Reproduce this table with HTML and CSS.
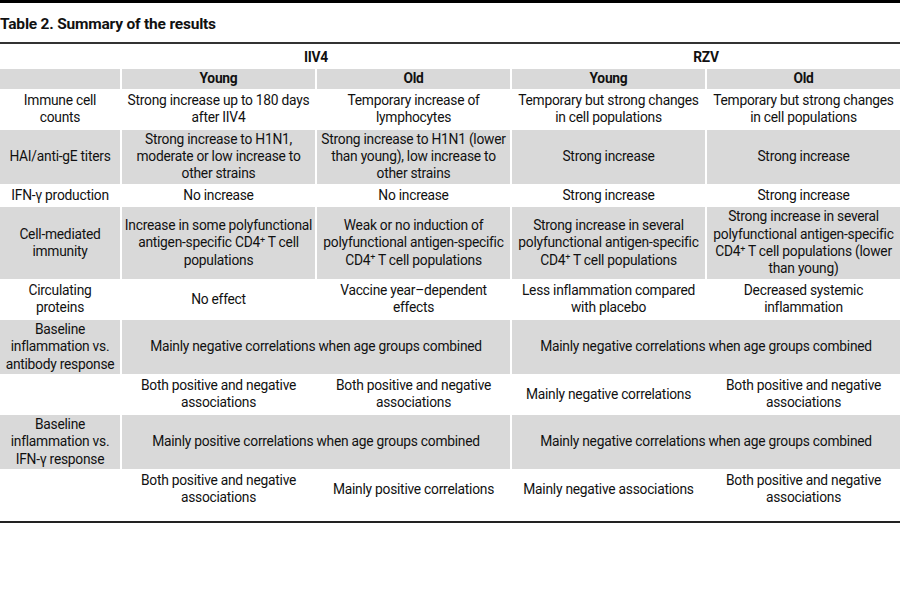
FILE: index.html
```html
<!DOCTYPE html>
<html>
  <head>
    <title>Table 2. Summary of the results</title>
    <link rel="stylesheet" href="styles.css">
  </head>
  <body>
    <div class="topbar"></div>
    <h1 class="caption">Table 2. Summary of the results</h1>
    <table class="results">
      <colgroup>
        <col class="label-col">
        <col><col><col><col>
      </colgroup>
      <thead>
        <tr class="group-row">
          <th></th>
          <th colspan="2">IIV4</th>
          <th colspan="2">RZV</th>
        </tr>
        <tr class="shade">
          <th></th>
          <th>Young</th>
          <th>Old</th>
          <th>Young</th>
          <th>Old</th>
        </tr>
      </thead>
      <tbody>
        <tr>
          <td>Immune cell<br>counts</td>
          <td>Strong increase up to 180 days after IIV4</td>
          <td>Temporary increase of lymphocytes</td>
          <td>Temporary but strong changes in cell populations</td>
          <td>Temporary but strong changes in cell populations</td>
        </tr>
        <tr class="shade">
          <td>HAI/anti-gE titers</td>
          <td>Strong increase to H1N1, moderate or low increase to other strains</td>
          <td>Strong increase to H1N1 (lower than young), low increase to other strains</td>
          <td>Strong increase</td>
          <td>Strong increase</td>
        </tr>
        <tr>
          <td>IFN-γ production</td>
          <td>No increase</td>
          <td>No increase</td>
          <td>Strong increase</td>
          <td>Strong increase</td>
        </tr>
        <tr class="shade">
          <td>Cell-mediated immunity</td>
          <td>Increase in some polyfunctional antigen-specific CD4<sup>+</sup> T cell populations</td>
          <td>Weak or no induction of polyfunctional antigen-specific CD4<sup>+</sup> T cell populations</td>
          <td>Strong increase in several polyfunctional antigen-specific CD4<sup>+</sup> T cell populations</td>
          <td>Strong increase in several polyfunctional antigen-specific CD4<sup>+</sup> T cell populations (lower than young)</td>
        </tr>
        <tr>
          <td>Circulating<br>proteins</td>
          <td>No effect</td>
          <td>Vaccine year–dependent<br>effects</td>
          <td>Less inflammation compared with placebo</td>
          <td>Decreased systemic inflammation</td>
        </tr>
        <tr class="shade">
          <td>Baseline inflammation vs. antibody response</td>
          <td colspan="2">Mainly negative correlations when age groups combined</td>
          <td colspan="2">Mainly negative correlations when age groups combined</td>
        </tr>
        <tr>
          <td></td>
          <td>Both positive and negative associations</td>
          <td>Both positive and negative associations</td>
          <td>Mainly negative correlations</td>
          <td>Both positive and negative associations</td>
        </tr>
        <tr class="shade">
          <td>Baseline inflammation vs. IFN-γ response</td>
          <td colspan="2">Mainly positive correlations when age groups combined</td>
          <td colspan="2">Mainly negative correlations when age groups combined</td>
        </tr>
        <tr>
          <td></td>
          <td>Both positive and negative associations</td>
          <td>Mainly positive correlations</td>
          <td>Mainly negative associations</td>
          <td>Both positive and negative associations</td>
        </tr>
      </tbody>
    </table>
    <div class="bottom-rule"></div>
  </body>
</html>
```

FILE: styles.css
```css
body {
  margin: 0;
  font-family: Roboto, "Liberation Sans", sans-serif;
  color: #111;
  background-color: #fff;
}

.topbar {
  height: 3px;
  background-color: #000;
}

.caption {
  margin: 0;
  padding: 12px 0 9px 0;
  font-size: 15.5px;
  line-height: 18px;
  font-weight: bold;
  letter-spacing: -0.2px;
  border-bottom: 2px solid #333;
}

.results {
  width: 904px;
  margin: 2px -2px 0 -2px;
  table-layout: fixed;
  border-collapse: separate;
  border-spacing: 2px;
  font-size: 13.8px;
  line-height: 17.4px;
  letter-spacing: -0.25px;
}

.label-col {
  width: 120px;
}

.results th,
.results td {
  padding: 1px 0;
  text-align: center;
  vertical-align: middle;
}

.results th {
  font-weight: bold;
}

.shade th,
.shade td {
  background-color: #d9d9d9;
}

/* keep the superscript from pushing the line apart */
.results sup {
  font-size: 9px;
  line-height: 1;
  vertical-align: baseline;
  position: relative;
  top: -0.5em;
}

.bottom-rule {
  margin-top: 11px;
  height: 2px;
  background-color: #222;
}
```
